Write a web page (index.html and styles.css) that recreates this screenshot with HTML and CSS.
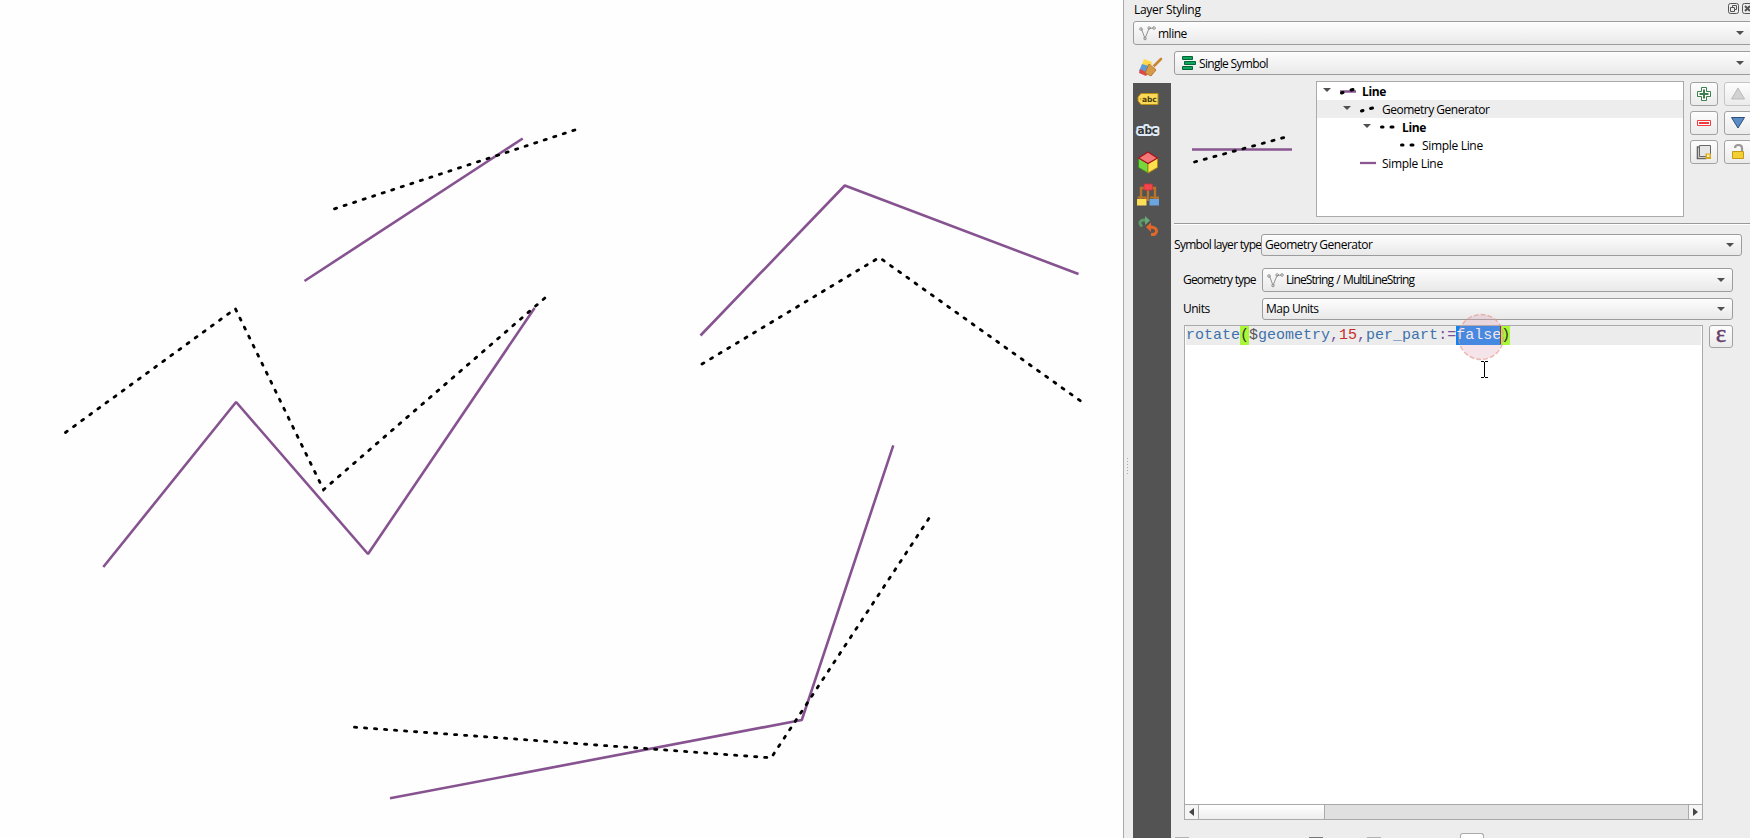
FILE: index.html
```html
<!DOCTYPE html>
<html lang="en">
<head>
<meta charset="utf-8">
<title>Layer Styling</title>
<link rel="stylesheet" href="styles.css">
</head>
<body>
<div class="app">
  <main class="map">
    <svg width="1123" height="838" viewBox="0 0 1123 838">
      <g class="feature">
        <path d="M304.500 281L522.700 138.500"/>
        <path d="M103.300 567L236.100 402L368 554L534.600 308"/>
        <path d="M700.500 335.500L844.800 185.500L1078.500 274"/>
        <path d="M390 798.300L801.800 720L893.300 445.300"/>
      </g>
      <g class="rotated">
        <path d="M334.500 208.800L576.300 129.500"/>
        <path d="M65.500 432.500L235.400 308.700L323.500 489.700L547.200 296"/>
        <path d="M702 364L879.300 257.500L1082 402"/>
        <path d="M354.500 727.200L771.200 757.800L930.500 516"/>
      </g>
    </svg>
  </main>
  <div class="splitter"><i class="grip"></i></div>
  <aside class="panel">
    <header class="title">
      <span>Layer Styling</span>
      <svg width="22" height="12" viewBox="0 0 22 12" fill="none" stroke="#555">
        <rect x=".5" y=".5" width="10" height="10" rx="2"/><path d="M4.5 4V2.5h4v4H7M2.5 4.5h4v4h-4z"/>
        <rect x="14.5" y=".5" width="10" height="10" rx="2"/><path d="M17 3l5 5M22 3l-5 5" stroke-width="2"/>
      </svg>
    </header>
    <div class="combo layer">
      <svg class="vline" width="17" height="15" viewBox="0 0 17 15"><path d="M2.5 3L6 12.5L10 2.5L14.5 2"/><circle cx="2" cy="3" r="1.3"/><circle cx="6" cy="12.5" r="1.3"/><circle cx="10.2" cy="2" r="1.3"/><circle cx="15" cy="2" r="1.3"/></svg>
      <span>mline</span><i class="arrow"></i>
    </div>
    <div class="body">
      <nav class="tabs">
        <div class="tab active">
          <svg width="24" height="20" viewBox="0 0 24 20"><path d="M5 1l8 3-3 8-8-3z" fill="#ffd94a"/><path d="M3 6l7 2-3 8-7-3z" fill="#5c9bd8"/><path d="M1 11l8 4-2 3-7-3z" fill="#e04848"/><path d="M22 1L15 8" stroke="#c98632" stroke-width="2.6" stroke-linecap="round"/><path d="M10 6l7 6-5 6-6-3z" fill="#d99a48" stroke="#a86a22" stroke-width=".8"/><path d="M12 6l5 5" stroke="#efd0a0"/></svg>
        </div>
        <div class="tab"><svg width="22" height="14" viewBox="0 0 22 14"><path d="M4 1.5h17v11H4L1 9V5z" fill="#f9d85a" stroke="#b98f14"/><circle cx="3.6" cy="7" r=".8" fill="#b98f14"/><text x="5" y="10" class="tag-text">abc</text></svg></div>
        <div class="tab"><svg width="24" height="16" viewBox="0 0 24 16"><text x="1.500" y="12" class="halo-text">abc</text></svg></div>
        <div class="tab"><svg width="22" height="24" viewBox="0 0 22 24" stroke-linejoin="round"><path d="M1.5 7L11 12.500V22L1.500 16.500z" fill="#76d63c" stroke="#3d8f1d"/><path d="M20.500 7L11 12.500V22L20.500 16.500z" fill="#ffe14d" stroke="#b08a12"/><path d="M11 1l9.500 6L11 12.500L1.500 7z" fill="#f27878" stroke="#a51420" stroke-width="1.300"/></svg></div>
        <div class="tab"><svg width="24" height="24" viewBox="0 0 24 24"><path d="M5 16V5h14v11M12 6v12" fill="none" stroke="#b8742a" stroke-width="2.400"/><path d="M8 1h8.500v6H8z" fill="#f0474d" stroke="#d03138" stroke-width=".8"/><path d="M1.500 14.500h8v2M14 14.500h8v2" stroke="#b8742a" stroke-width="2" fill="none"/><path d="M1 16h9.500v6.500H1z" fill="#fbdf57"/><path d="M13.500 16H23v6.500h-9.500z" fill="#6aa5df"/></svg></div>
        <div class="tab"><svg width="22" height="22" viewBox="0 0 22 22" fill="none"><path d="M5 10.500Q1 6.500 4.500 4.500Q7 3.500 9 4.500" stroke="#5c9968" stroke-width="3"/><path d="M8 0l5 4.500L8 9z" fill="#6ba777"/><path d="M14 18.500q5.500 .5 5.500-3.500q0-3.500-6-4" stroke="#e2672b" stroke-width="3"/><path d="M14 6.500l-5 4.500 5 5z" fill="#e2672b"/></svg></div>
      </nav>
      <section class="content">
        <div class="combo renderer">
          <svg width="14" height="15" viewBox="0 0 14 15" fill="#0ca75c" stroke="#066437"><path d="M.5.5h10v3H.5zM2.500 5.500h11v3h-11zM.5 10.500h10v3H.5z"/></svg>
          <span>Single Symbol</span><i class="arrow"></i>
        </div>
        <div class="symbol">
          <svg class="preview" width="142" height="136" viewBox="0 0 142 136"><path d="M18 68.500h100" stroke="#895690" stroke-width="2.700"/><path d="M20.500 81L112 56" class="dots"/></svg>
          <div class="tree">
            <div class="node l0"><i class="arrow"></i><svg width="16" height="8"><path d="M0 4.500h16" stroke="#895690" stroke-width="2.500"/><path d="M1.500 6l1.500-.5M11 3l2-.5" class="dot"/></svg><b>Line</b></div>
            <div class="node l1 selected"><i class="arrow"></i><svg width="16" height="8"><path d="M1.500 6l1.500-.5M10.500 3.500l2-.5" class="dot"/></svg><span>Geometry Generator</span></div>
            <div class="node l2"><i class="arrow"></i><svg width="16" height="8"><path d="M1.500 4h1.500M11 4h2" class="dot"/></svg><b>Line</b></div>
            <div class="node l3"><svg width="16" height="8"><path d="M1.500 4h1.500M11 4h2" class="dot"/></svg><span>Simple Line</span></div>
            <div class="node l4"><svg width="16" height="8"><path d="M0 4h16" stroke="#895690" stroke-width="2.300"/></svg><span>Simple Line</span></div>
          </div>
          <div class="tools">
            <div class="btn"><svg width="16" height="16" viewBox="0 0 16 16"><path d="M5.500 1.500h5v4h4v5h-4v4h-5v-4h-4v-5h4z" fill="#fff" stroke="#3f7f4c"/><path d="M8 3.500v9M3.500 8h9" stroke="#3f7f4c" stroke-width="2"/></svg></div>
            <div class="btn off"><svg width="16" height="16" viewBox="0 0 16 16"><path d="M8 2l6.500 11h-13z" fill="#d2d2d2" stroke="#bbb"/></svg></div>
            <div class="btn"><svg width="16" height="16" viewBox="0 0 16 16"><path d="M1.500 5.500h13v5h-13z" fill="#fff" stroke="#ee3b40"/><path d="M3 8h10" stroke="#ee3b40" stroke-width="2"/></svg></div>
            <div class="btn"><svg width="16" height="16" viewBox="0 0 16 16"><path d="M1.500 2.500h13L8 13z" fill="#5a8dc6" stroke="#2d4e78"/></svg></div>
            <div class="btn"><svg width="16" height="16" viewBox="0 0 16 16"><path d="M3 3H1.500v11.500h9" fill="none" stroke="#666" stroke-width="1.600"/><path d="M3.500 1.500h11v11h-11z" fill="#e5e5e5" stroke="#666"/><path d="M9.500 9.500h5.500v5.500H9.500z" fill="#d6a71d"/><path d="M11 10.500h2.500v2.500h-2.500z" fill="#fff0ad"/></svg></div>
            <div class="btn"><svg width="16" height="18" viewBox="0 0 16 18"><path d="M5 5Q5 2 8.500 2Q12 2 12 5V9" fill="none" stroke="#999" stroke-width="2.200"/><path d="M2.500 8.500h11v7h-11z" fill="#f2cf35" stroke="#c49a16"/></svg></div>
          </div>
        </div>
        <hr class="rule">
        <div class="row type-row"><label>Symbol layer type</label><div class="combo"><span>Geometry Generator</span><i class="arrow"></i></div></div>
        <div class="row geom-row"><label>Geometry type</label><div class="combo">
          <svg class="vline" width="17" height="15" viewBox="0 0 17 15"><path d="M2.500 3L6 12.500L10 2.500L14.500 2"/><circle cx="2" cy="3" r="1.300"/><circle cx="6" cy="12.500" r="1.300"/><circle cx="10.200" cy="2" r="1.300"/><circle cx="15" cy="2" r="1.300"/></svg>
          <span class="tight">LineString / MultiLineString</span><i class="arrow"></i></div></div>
        <div class="row unit-row"><label>Units</label><div class="combo"><span>Map Units</span><i class="arrow"></i></div></div>
        <div class="expression">
          <div class="editor">
            <div class="code"><span class="fn">rotate</span><span class="paren">(</span><span class="var">$</span><span class="fn">geometry</span><span class="op">,</span><span class="num">15</span><span class="op">,</span><span class="fn">per_part</span><span class="op">:=</span><span class="sel">false</span><span class="paren">)</span>
              <svg class="pointer" width="48" height="78" viewBox="0 0 48 78"><circle cx="24" cy="24" r="22.500" fill="#d9a0b0" fill-opacity=".27" stroke="#e58f84" stroke-opacity=".6" stroke-width="1.400" stroke-dasharray="5 2"/><path d="M43.500 13v18" stroke="#982d45"/><path d="M24 48.500h3M28 48.500h3M27.500 49v15M24 64.500h3M28 64.500h3" stroke="#000"/></svg>
            </div>
            <div class="scrollbar"><div class="sb-btn"><i class="left"></i></div><div class="thumb"></div><div class="track"></div><div class="sb-btn end"><i class="right"></i></div></div>
          </div>
          <div class="btn epsilon">ε</div>
        </div>
        <div class="footer"><i class="cut"></i><i class="cut dark"></i><i class="cut third"></i><i class="cut-btn"></i></div>
      </section>
    </div>
  </aside>
</div>
</body>
</html>
```
FILE: styles.css
```css
* { box-sizing: border-box; }
body { margin: 0; overflow: hidden; background: #fff; color: #000; font: 12px/18px "Open Sans", "Noto Sans", sans-serif; letter-spacing: -0.5px; }
svg { display: block; flex: none; overflow: visible; }
.app { display: flex; width: 1750px; height: 838px; overflow: hidden; }
.map { width: 1123px; background: #fefefe; }
.feature path { fill: none; stroke: #865390; stroke-width: 2.6; stroke-linejoin: bevel; }
.rotated path, .dots { fill: none; stroke: #000; stroke-width: 2.8; stroke-linecap: round; stroke-dasharray: 2.2 7.83; }
.dot { fill: none; stroke: #000; stroke-width: 3; stroke-linecap: round; }
.splitter { width: 10px; border-left: 1px solid #a9a9a9; background: #ededed; }
.grip { display: block; width: 1px; height: 17px; margin: 458px 0 0 3px; background: repeating-linear-gradient(#aaa 0 1px, transparent 1px 3px); }
.panel { display: flex; flex-direction: column; width: 617px; background: #ededed; }
.title { display: flex; justify-content: space-between; height: 21px; padding: 0 0 3px 1px; align-items: center; letter-spacing: -.3px; }
.title span { padding-top: 1px; }
.title svg { margin-top: -1px; }
.combo { display: flex; align-items: center; border: 1px solid #9c9c9c; border-radius: 3px; background: linear-gradient(#fdfdfd, #e9e9e9); padding: 0 7px 0 4px; white-space: nowrap; }
.arrow { display: block; flex: none; width: 8px; height: 4px; background: #505050; clip-path: polygon(0 0, 100% 0, 50% 100%); }
.combo .arrow { margin-left: auto; }
.layer { flex: none; height: 24px; margin-right: -3px; padding-left: 5px; padding-right: 8px; }
.layer span, .renderer span { padding-top: 2px; }
.layer span { letter-spacing: -.5px; }
.vline { fill: none; stroke: #929292; margin-right: 2px; }
.body { display: flex; flex: 1; }
.tabs { width: 38px; background: linear-gradient(#ededed 38px, #535353 38px); }
.tab { display: flex; align-items: center; justify-content: center; width: 30px; height: 32px; }
.tab.active { height: 38px; width: 36px; padding-top: 8px; }
.tab:nth-child(3) { height: 29px; }
.tab:nth-child(4) { height: 37px; }
.tab:nth-child(5) { height: 27px; }
.tab:nth-child(6) { height: 37px; }
.tag-text { font: bold 7.5px "DejaVu Sans", sans-serif; fill: #4a3c0c; letter-spacing: -.1px; }
.halo-text { font: bold 10.5px "DejaVu Sans", sans-serif; fill: #333; stroke: #dfeaf7; stroke-width: 4px; paint-order: stroke; stroke-linejoin: round; letter-spacing: -.2px; }
.content { display: flex; flex-direction: column; width: 579px; padding: 6px 0 0 3px; }
.renderer { height: 24px; margin-right: -3px; padding: 0 8px 0 7px; }
.renderer span { margin-left: 2px; letter-spacing: -.68px; }
.renderer span { margin-left: 3px; }
.symbol { display: flex; height: 136px; margin-top: 6px; }
.tree { flex: none; width: 368px; border: 1px solid #aaa; background: #fff; }
.node { display: flex; align-items: center; height: 18px; padding-top: 1px; }
.node .arrow { margin: -3px 9px 0 6px; }
.node svg { margin-right: 6px; margin-top: -2px; }
.selected { background: #ededed; }
.l1 { padding-left: 20px; }
.l2 { padding-left: 40px; }
.l3 { padding-left: 83px; }
.l4 { padding-left: 43px; }
.l0 b, .l2 b, .l3 span, .l4 span { letter-spacing: -.32px; }
.tools { display: grid; flex: none; grid-template-columns: 28px 28px; grid-auto-rows: 24px; gap: 5px 6px; padding: 1px 0 0 6px; }
.btn { display: flex; align-items: center; justify-content: center; border: 1px solid #a2a2a2; border-radius: 3px; background: linear-gradient(#fdfdfd, #ebebeb); }
.off { border-color: #c5c5c5; }
.rule { width: 100%; height: 2px; margin: 6px 0 9px; border: 0; border-top: 1px solid #999; background: #fff; }
.row { display: flex; align-items: center; }
.row label { white-space: nowrap; flex: none; }
.type-row .combo { width: 481px; height: 22px; }
.type-row label { width: 87px; letter-spacing: -.7px; }
.geom-row { margin-top: 12px; padding-left: 9px; }
.geom-row label, .unit-row label { width: 79px; }
.geom-row label { letter-spacing: -.8px; }
.tight { letter-spacing: -.9px; word-spacing: 1px; }
.geom-row .combo { width: 471px; height: 24px; }
.unit-row { margin-top: 6px; padding-left: 9px; }
.unit-row .combo { width: 471px; height: 22px; }
.unit-row .combo, .type-row .combo { padding-left: 3px; }
.expression { display: flex; gap: 6px; margin: 5px 0 0 10px; align-items: flex-start; }
.editor { display: flex; flex-direction: column; width: 519px; height: 495px; border: 1px solid #aaa; background: #fff; }
.code { position: relative; height: 19px; margin: 0 1px; background: #ececec; font: 15px/19px "Courier New", "Liberation Mono", monospace; letter-spacing: 0; white-space: nowrap; display: flex; }
.code > span { height: 19px; }
.fn { color: #3f72ab; }
.op { color: #7d4e9c; }
.var { color: #555; }
.num { color: #c92a2a; }
.paren { background: #a9f838; color: #333; }
.sel { background: #0f83f2; color: #fff; }
.pointer { position: absolute; left: 271px; top: -13px; }
.scrollbar { display: flex; height: 15px; margin-top: auto; border-top: 1px solid #a9a9a9; background: #e0e0e0; }
.sb-btn { display: flex; align-items: center; justify-content: center; width: 14px; border-right: 1px solid #aaa; background: #f5f5f5; }
.sb-btn.end { border-right: 0; border-left: 1px solid #aaa; }
.thumb { width: 126px; border-right: 1px solid #aaa; background: linear-gradient(#fff, #eee); }
.track { flex: 1; }
.left, .right { width: 5px; height: 8px; background: #444; clip-path: polygon(100% 0, 100% 100%, 0 50%); }
.right { clip-path: polygon(0 0, 100% 50%, 0 100%); }
.epsilon { width: 24px; height: 23px; padding-bottom: 6px; color: #66406b; font: 25px/20px "Liberation Serif", serif; letter-spacing: 0; -webkit-text-stroke: .4px #66406b; }
.footer { display: flex; align-items: flex-end; height: 18px; padding-left: 1px; }
.cut { width: 14px; height: 1px; background: #b3b3b3; }
.cut.dark { margin-left: 120px; background: #777; }
.cut.third { margin-left: 44px; }
.cut-btn { width: 24px; height: 5px; margin-left: 79px; border: 1px solid #aaa; border-bottom: 0; border-radius: 3px 3px 0 0; background: #fff; }
```
